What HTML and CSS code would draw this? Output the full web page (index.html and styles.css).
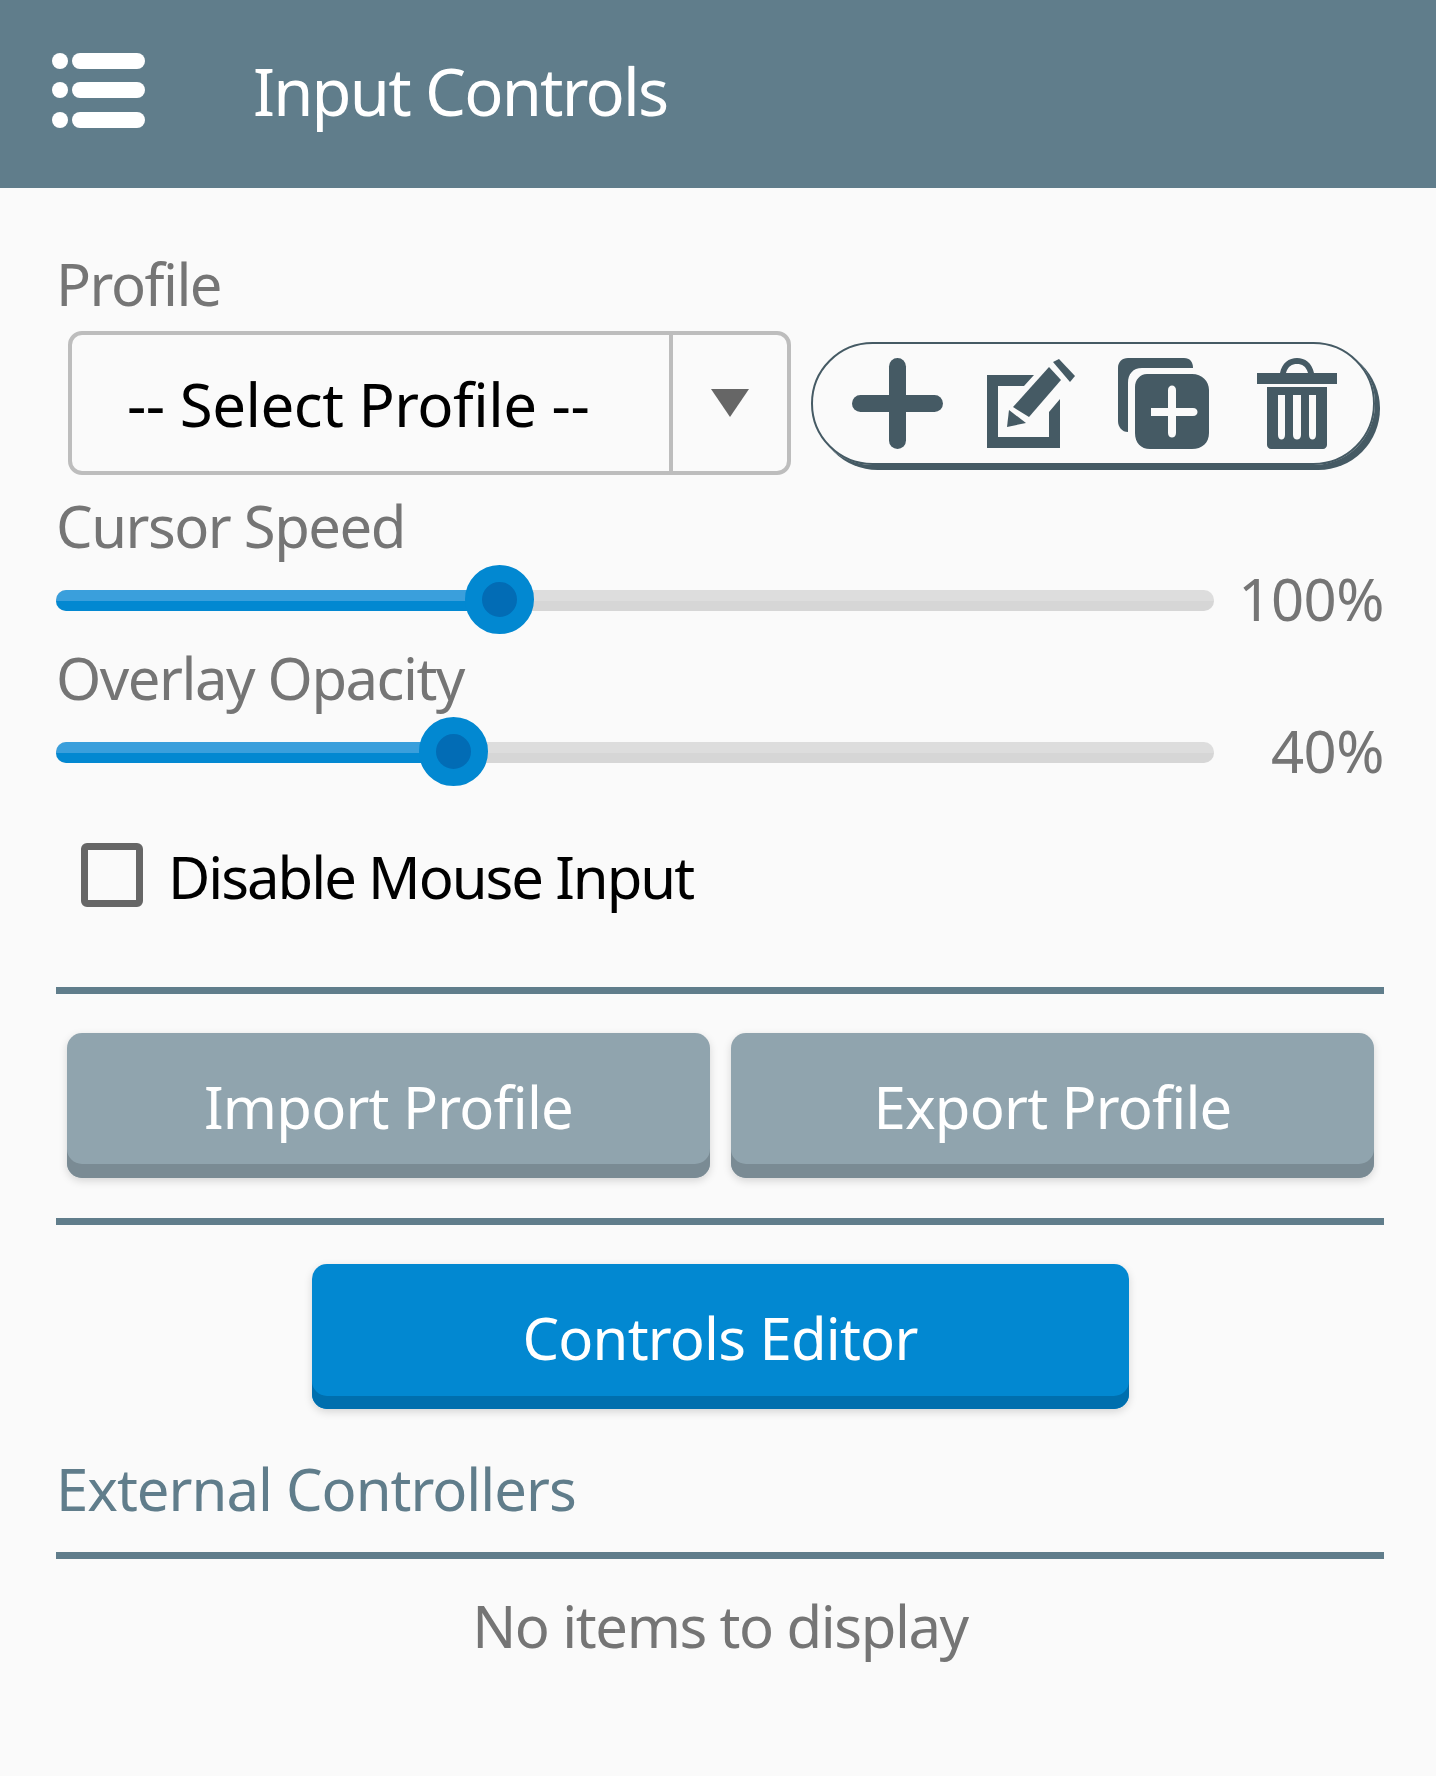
FILE: index.html
```html
<!doctype html>
<html lang="en">
  <head>
    <meta charset="utf-8">
    <title>Input Controls</title>
    <link rel="stylesheet" href="styles.css">
  </head>

  <body>
    <header class="appbar">
      <svg class="menu-icon" width="93" height="75" viewBox="0 0 93 75">
        <ellipse cx="8" cy="8" rx="8" ry="8" />
        <rect x="20" y="0" width="73" height="16" rx="8" />
        <ellipse cx="8" cy="37" rx="8" ry="8" />
        <rect x="20" y="29" width="73" height="16" rx="8" />
        <ellipse cx="8" cy="67" rx="8" ry="8" />
        <rect x="20" y="59" width="73" height="16" rx="8" />
      </svg>
      <h1 class="appbar-title">Input Controls</h1>
    </header>

    <main class="content">
      <div class="field-label profile-label">Profile</div>
      <div class="profile-row">
        <div class="select">
          <div class="select-value">-- Select Profile --</div>
          <div class="select-arrow"><span class="arrow"></span></div>
        </div>
        <div class="actions">
          <!-- add -->
          <svg class="action action-add" width="91" height="91" viewBox="0 0 91 91">
            <rect x="37" y="0" width="17" height="91" rx="8.5" />
            <rect x="0" y="37" width="91" height="17" rx="8.5" />
          </svg>
          <!-- edit -->
          <svg class="action action-edit" width="89" height="90" viewBox="0 0 89 90">
            <path d="M0 17H47L37 28H11V79H62V54L73 41V90H0Z" />
            <path d="M26 49L62 9L74 22L42 59Z" />
            <path d="M22 52L39 65L20 69Z" />
            <path d="M66 4L72 1L88 18L83 24Z" />
          </svg>
          <!-- copy -->
          <svg class="action action-copy" width="91" height="91" viewBox="0 0 91 91">
            <path d="M10 0H66C72 0 75 4 75 10H24C15 10 10 16 10 25V74C4 74 0 69 0 63V10C0 4 4 0 10 0Z" />
            <path fill-rule="evenodd" d="M29 16H74C84 16 91 23 91 32V75C91 85 84 91 74 91H32C23 91 17 85 17 75V29C17 22 22 16 29 16ZM50 32V50H33V58H50V75C50 81 58 81 58 75V58H75C81 58 81 50 75 50H58V32C58 26 50 26 50 32Z" />
          </svg>
          <!-- delete -->
          <svg class="action" width="80" height="91" viewBox="0 0 80 91">
            <path fill-rule="evenodd" d="M0 15H23C25 5 32 0 40 0C48 0 55 5 57 15H80V26H0ZM29 15H51C49 8 45 6 40 6C35 6 31 8 29 15Z" />
            <path fill-rule="evenodd" d="M10 29H70V87C70 89 68 91 66 91H14C12 91 10 89 10 87ZM21 37V77C21 83 28 83 28 77V37ZM36 37V77C36 83 44 83 44 77V37ZM52 37V77C52 83 59 83 59 77V37Z" />
          </svg>
        </div>
      </div>

      <div class="field-label cursor-label">Cursor Speed</div>
      <div class="slider-row">
        <div class="slider">
          <div class="slider-fill" style="width: 38.3%"></div>
          <div class="slider-thumb" style="left: 38.3%"></div>
        </div>
        <div class="slider-value">100%</div>
      </div>

      <div class="field-label">Overlay Opacity</div>
      <div class="slider-row">
        <div class="slider">
          <div class="slider-fill" style="width: 34.4%"></div>
          <div class="slider-thumb" style="left: 34.4%"></div>
        </div>
        <div class="slider-value">40%</div>
      </div>

      <div class="checkbox-row">
        <span class="checkbox"></span>
        <span class="checkbox-label">Disable Mouse Input</span>
      </div>

      <div class="divider divider-first"></div>
      <div class="button-row">
        <button class="btn btn-grey">Import Profile</button>
        <button class="btn btn-grey">Export Profile</button>
      </div>
      <div class="divider divider-second"></div>

      <div class="editor-row">
        <button class="btn btn-blue">Controls Editor</button>
      </div>

      <div class="section-title">External Controllers</div>
      <div class="divider divider-third"></div>
      <div class="empty">No items to display</div>
    </main>
  </body>
</html>
```

FILE: styles.css
```css
html,
body {
  margin: 0;
  height: 100%;
}

body {
  background: #fafafa;
  font-family: "Noto Sans", sans-serif;
  overflow: hidden;
}

.appbar {
  display: flex;
  align-items: center;
  height: 188px;
  padding: 0 0 7px 52px;
  box-sizing: border-box;
  background: #607d8b;
}

.menu-icon {
  fill: #fff;
}

.appbar-title {
  margin: 0 0 0 108px;
  color: #fff;
  font-size: 65px;
  font-weight: 400;
  letter-spacing: -1.8px;
  line-height: 80px;
}

.content {
  padding: 0 52px 0 56px;
}

.field-label {
  margin-bottom: -4px;
  color: #757575;
  font-size: 58px;
  letter-spacing: -1.5px;
  line-height: 76px;
}

.profile-label {
  margin-top: 58px;
}

.cursor-label {
  margin-top: 13px;
}

.profile-row {
  display: flex;
  align-items: center;
  height: 144px;
  margin-top: 13px;
  padding-left: 12px;
}

.select {
  display: flex;
  width: 723px;
  height: 144px;
  border: 4px solid #bdbdbd;
  border-radius: 14px;
  box-sizing: border-box;
}

.select-value {
  flex: 1;
  padding-left: 55px;
  color: #000;
  font-size: 60px;
  letter-spacing: -0.5px;
  line-height: 138px;
}

.select-arrow {
  display: flex;
  align-items: center;
  justify-content: center;
  width: 114px;
  border-left: 4px solid #bdbdbd;
}

.arrow {
  width: 0;
  height: 0;
  border-left: 19px solid transparent;
  border-right: 19px solid transparent;
  border-top: 28px solid #666;
}

.actions {
  display: flex;
  align-items: center;
  width: 564px;
  height: 123px;
  margin-left: 20px;
  padding-left: 39px;
  border: 2px solid #455a64;
  border-radius: 62px;
  box-sizing: border-box;
  box-shadow: 5px 5px 0 #455a64;
}

.action {
  flex: none;
  fill: #455a64;
}

.action-add {
  margin-right: 44px;
}

.action-edit {
  margin-right: 42px;
}

.action-copy {
  margin-right: 48px;
}

.slider-row {
  display: flex;
  align-items: center;
  height: 80px;
}

.slider {
  position: relative;
  flex: none;
  width: 1158px;
  height: 21px;
  border-radius: 10px;
  background: linear-gradient(#ddd 50%, #d6d6d6 50%);
}

.slider-fill {
  height: 100%;
  border-radius: 10px 0 0 10px;
  background: linear-gradient(#3a9fdc 50%, #0288d1 50%);
}

.slider-thumb {
  position: absolute;
  top: 50%;
  width: 35px;
  height: 35px;
  margin: -35px 0 0 -35px;
  border: 17.5px solid #0288d1;
  border-radius: 50%;
  background: #026cb5;
}

.slider-value {
  flex: 1;
  padding-bottom: 4px;
  color: #757575;
  font-size: 58px;
  letter-spacing: -0.5px;
  text-align: right;
}

.checkbox-row {
  display: flex;
  align-items: center;
  height: 64px;
  margin-top: 51px;
  padding-left: 25px;
}

.checkbox {
  flex: none;
  width: 62px;
  height: 64px;
  border: 7px solid #666;
  border-radius: 6px;
  box-sizing: border-box;
}

.checkbox-label {
  margin-left: 25px;
  padding-top: 3px;
  color: #000;
  font-size: 58px;
  letter-spacing: -2px;
  line-height: 64px;
}

.divider {
  height: 7px;
  background: #607d8b;
}

.divider-first {
  margin-top: 80px;
}

.divider-second {
  margin-top: 40px;
}

.divider-third {
  margin-top: 27px;
}

.button-row {
  display: flex;
  gap: 21px;
  margin-top: 39px;
  padding: 0 10px 0 11px;
}

.btn {
  height: 145px;
  padding: 2px 0 0;
  border: 0;
  border-radius: 15px;
  color: #fff;
  font-family: inherit;
  font-size: 58px;
  letter-spacing: -0.8px;
}

.btn-grey {
  flex: 1;
  background: #90a4ae;
  box-shadow: inset 0 -14px 0 #7a8b94, 0 3px 8px rgba(0, 0, 0, 0.15);
}

.editor-row {
  display: flex;
  justify-content: center;
  margin-top: 39px;
}

.btn-blue {
  width: 817px;
  background: #0288d1;
  box-shadow: inset 0 -13px 0 #006fae, 0 3px 8px rgba(0, 0, 0, 0.15);
}

.section-title {
  margin-top: 44px;
  color: #607d8b;
  font-size: 58px;
  letter-spacing: -1px;
  line-height: 72px;
}

.empty {
  margin-top: 31px;
  color: #757575;
  font-size: 58px;
  letter-spacing: -1.4px;
  line-height: 72px;
  text-align: center;
}
```
